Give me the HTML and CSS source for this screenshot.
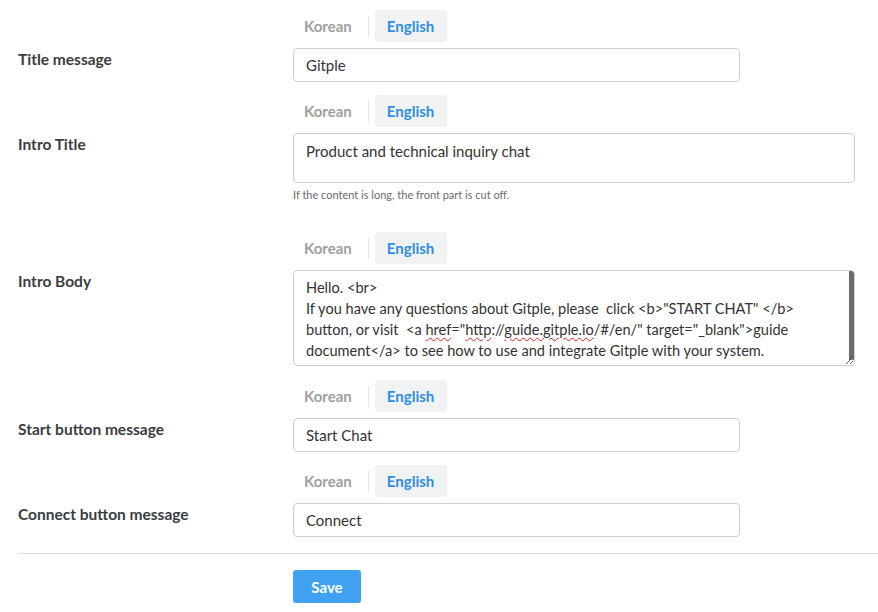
FILE: index.html
```html
<!DOCTYPE html>
<html>
<head>
<meta charset="utf-8">
<link rel="stylesheet" href="styles.css">
</head>
<body>
<div class="page">
  <div class="row">
    <div class="tabs"><span class="tab">Korean</span><span class="sep"></span><span class="tab active">English</span></div>
    <div class="label">Title message</div>
    <div class="field"><div class="input short">Gitple</div></div>
  </div>

  <div class="row">
    <div class="tabs"><span class="tab">Korean</span><span class="sep"></span><span class="tab active">English</span></div>
    <div class="label">Intro Title</div>
    <div class="field">
      <div class="textarea small">Product and technical inquiry chat</div>
      <div class="hint">If the content is long, the front part is cut off.</div>
    </div>
  </div>

  <div class="row body-row">
    <div class="tabs"><span class="tab">Korean</span><span class="sep"></span><span class="tab active">English</span></div>
    <div class="label">Intro Body</div>
    <div class="field">
      <div class="textarea big">Hello. &lt;br&gt;<br>If you have any questions about Gitple, please&nbsp; click &lt;b&gt;"START CHAT" &lt;/b&gt;<br>button, or visit&nbsp; &lt;a <span class="sp">href</span>="<span class="sp">http</span>://<span class="sp">guide.gitple.io</span>/#/en/" target="_blank"&gt;guide<br>document&lt;/a&gt; to see how to use and integrate Gitple with your system.</div>
    </div>
  </div>

  <div class="row">
    <div class="tabs"><span class="tab">Korean</span><span class="sep"></span><span class="tab active">English</span></div>
    <div class="label">Start button message</div>
    <div class="field"><div class="input short">Start Chat</div></div>
  </div>

  <div class="row">
    <div class="tabs"><span class="tab">Korean</span><span class="sep"></span><span class="tab active">English</span></div>
    <div class="label">Connect button message</div>
    <div class="field"><div class="input short">Connect</div></div>
  </div>

  <div class="footer">
    <button class="save">Save</button>
  </div>
</div>
</body>
</html>
```

FILE: styles.css
```css
html, body {
  margin: 0;
  padding: 0;
  background: #ffffff;
}
body {
  font-family: Lato, "Open Sans", sans-serif;
  color: #333;
}
.page {
  padding: 10px 0 0 18px;
}
.row {
  display: grid;
  grid-template-columns: 275px 1fr;
  grid-template-rows: auto auto;
  row-gap: 6px;
  margin-bottom: 13px;
}
.row.body-row {
  margin-bottom: 14px;
}
.tabs {
  grid-column: 2;
  grid-row: 1;
  display: flex;
  align-items: center;
  height: 32px;
}
.tab {
  height: 32px;
  line-height: 32px;
  padding: 0 11px;
  font-size: 15px;
  font-weight: 700;
  color: #a0a0a0;
  border-radius: 3px;
}
.tab.active {
  background: #f1f2f4;
  color: #2f8de4;
  padding: 0 13px 0 12px;
}
.sep {
  width: 1px;
  height: 21px;
  background: #e6e6e6;
  margin: 0 6px 0 5px;
}
.label {
  grid-column: 1;
  grid-row: 2;
  padding-top: 1px;
  font-size: 15.5px;
  line-height: 20px;
  font-weight: 700;
  color: #3a3d42;
}
.field {
  grid-column: 2;
  grid-row: 2;
}
.input {
  box-sizing: border-box;
  height: 34px;
  width: 447px;
  border: 1px solid #cfcfcf;
  border-radius: 4px;
  padding: 0 12px;
  font-size: 15px;
  line-height: 32px;
  color: #333;
}
.textarea {
  box-sizing: border-box;
  width: 562px;
  border: 1px solid #cfcfcf;
  border-radius: 4px;
  padding: 7px 12px;
  font-size: 15px;
  line-height: 21px;
  color: #333;
}
.textarea.small {
  height: 50px;
}
.textarea.big {
  height: 96px;
  padding: 6px 8px 6px 12px;
  font-size: 14.6px;
  overflow: hidden;
  resize: vertical;
  background: linear-gradient(#6b6b6b, #6b6b6b) right top / 5px calc(100% - 5px) no-repeat;
}
.sp {
  text-decoration: underline wavy #e02020;
  text-decoration-thickness: 1px;
  text-underline-offset: 2px;
}
.hint {
  margin-top: 5px;
  font-size: 11px;
  line-height: 14px;
  color: #6b6b6b;
  padding-bottom: 17px;
}
.footer {
  border-top: 1px solid #e3e3e3;
  margin-top: 16px;
  padding: 16px 0 0 275px;
}
.save {
  width: 68px;
  height: 33px;
  border: none;
  border-radius: 3px;
  background: #3fa1f0;
  color: #fff;
  font-family: Lato, "Open Sans", sans-serif;
  font-size: 15px;
  font-weight: 700;
  padding: 0;
}
```
